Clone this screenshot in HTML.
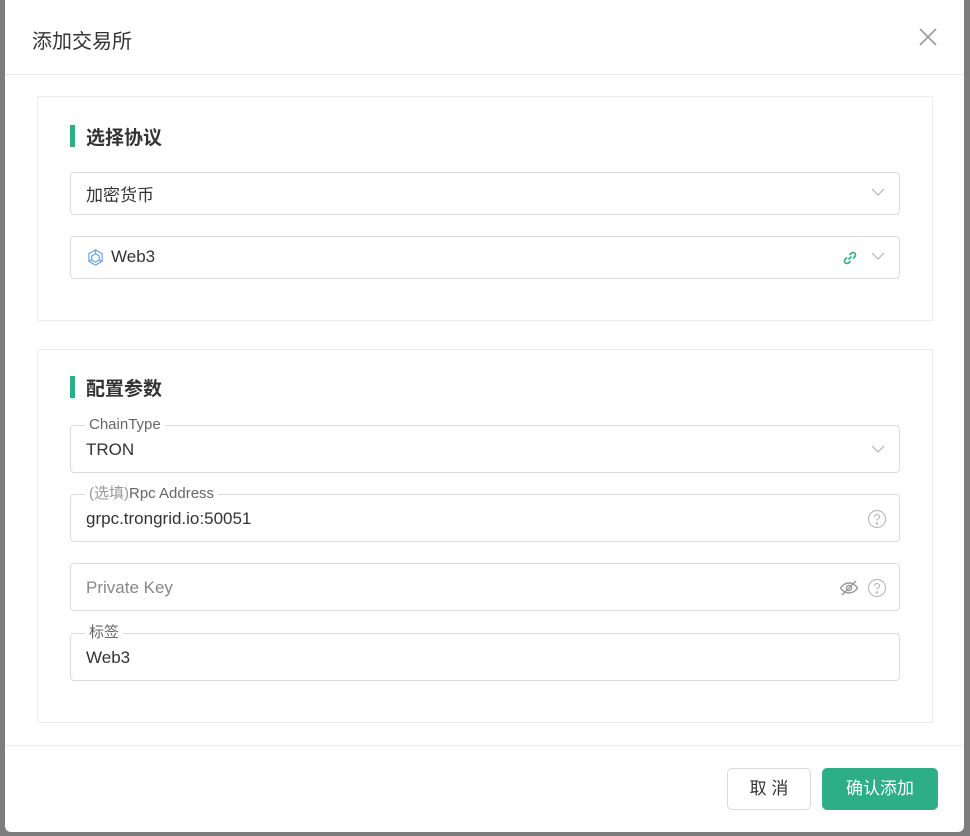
<!DOCTYPE html>
<html><head><meta charset="utf-8"><style>
*{box-sizing:border-box;margin:0;padding:0}
body{width:970px;height:836px;background:#7d7d7d;font-family:"Liberation Sans","Noto Sans CJK SC",sans-serif;position:relative;overflow:hidden}
.modal{position:absolute;left:5px;top:-6px;width:959px;height:838px;background:#fff;border-radius:6px}
.hdr{position:absolute;left:0;top:6px;width:100%;height:75px;border-bottom:1px solid #ebebeb}
.hdr .t{position:absolute;left:27px;top:25px;font-size:20px;color:#333}
.card{position:absolute;left:32px;width:896px;border:1px solid #ededed;background:#fff}
.sec{position:absolute;left:65px;font-size:19px;color:#333;font-weight:bold;padding-left:16px}
.sec:before{content:"";position:absolute;left:0;top:2px;width:5px;height:22px;background:#2dae87}
.inp{position:absolute;left:65px;width:830px;border:1px solid #dcdcdc;border-radius:4px;font-size:17px;color:#333}
.inp .v{position:absolute;left:15px}
.lbl{position:absolute;left:14px;top:-9px;background:#fff;padding:0 4px;font-size:15px;color:#666;line-height:16px}
.chev{position:absolute;right:14px}
.foot{position:absolute;left:0;top:751px;width:100%;border-top:1px solid #ebebeb}
.btn{position:absolute;height:42px;border-radius:5px;font-size:17px;text-align:center;line-height:42px}
</style></head><body>
<div class="modal">
<div class="hdr"><div class="t">添加交易所</div>
<svg style="position:absolute;left:913px;top:27px" width="20" height="20" viewBox="0 0 20 20"><path d="M2 2L18 18M18 2L2 18" stroke="#999" stroke-width="1.6"/></svg></div>

<div class="card" style="top:102px;height:225px"></div>
<div class="sec" style="top:129px">选择协议</div>
<div class="inp" style="top:178px;height:43px"><span class="v" style="top:8px">加密货币</span>
<svg class="chev" style="top:14px" width="14" height="10" viewBox="0 0 14 10"><path d="M1 2l6 6 6-6" fill="none" stroke="#bbb" stroke-width="1.3"/></svg></div>
<div class="inp" style="top:242px;height:43px">
<svg style="position:absolute;left:15px;top:11px" width="19" height="19" viewBox="0 0 20 20" fill="none" stroke="#6a9fe0" stroke-width="1.2"><path d="M10 2l7 4v8l-7 4-7-4V6z"/><path d="M10 6l4 2.5v4L10 15l-4-2.5v-4z"/><path d="M10 2v4M17 14l-3-1.5M3 14l3-1.5"/></svg>
<span class="v" style="left:40px;top:10px">Web3</span>
<svg style="position:absolute;right:40px;top:12px" width="18" height="18" viewBox="0 0 18 18" fill="none" stroke="#2dae87" stroke-width="1.6"><path d="M7.5 10.5l3-3M6 8.5l-2 2a2.5 2.5 0 003.5 3.5l2-2M12 9.5l2-2A2.5 2.5 0 0010.5 4l-2 2"/></svg>
<svg class="chev" style="top:14px" width="14" height="10" viewBox="0 0 14 10"><path d="M1 2l6 6 6-6" fill="none" stroke="#bbb" stroke-width="1.3"/></svg></div>

<div class="card" style="top:355px;height:374px"></div>
<div class="sec" style="top:380px">配置参数</div>
<div class="inp" style="top:431px;height:48px"><div class="lbl">ChainType</div><span class="v" style="top:14px">TRON</span>
<svg class="chev" style="top:18px" width="14" height="10" viewBox="0 0 14 10"><path d="M1 2l6 6 6-6" fill="none" stroke="#bbb" stroke-width="1.3"/></svg></div>
<div class="inp" style="top:500px;height:48px"><div class="lbl"><span style="color:#999">(选填)</span>Rpc Address</div><span class="v" style="top:14px">grpc.trongrid.io:50051</span>
<svg style="position:absolute;right:12px;top:14px" width="20" height="20" viewBox="0 0 20 20" fill="none" stroke="#bbb" stroke-width="1.2"><circle cx="10" cy="10" r="8.5"/><path d="M7.5 8a2.5 2.5 0 115 0c0 1.5-2.5 1.8-2.5 3.5"/><circle cx="10" cy="14.5" r=".6" fill="#bbb"/></svg></div>
<div class="inp" style="top:569px;height:48px"><span class="v" style="top:14px;color:#888">Private Key</span>
<svg style="position:absolute;right:40px;top:15px" width="20" height="18" viewBox="0 0 20 18" fill="none" stroke="#999" stroke-width="1.4"><path d="M1.5 9s3-5 8.5-5 8.5 5 8.5 5-3 5-8.5 5S1.5 9 1.5 9z"/><circle cx="10" cy="9" r="2.6"/><path d="M3 16L17 2"/></svg>
<svg style="position:absolute;right:12px;top:14px" width="20" height="20" viewBox="0 0 20 20" fill="none" stroke="#bbb" stroke-width="1.2"><circle cx="10" cy="10" r="8.5"/><path d="M7.5 8a2.5 2.5 0 115 0c0 1.5-2.5 1.8-2.5 3.5"/><circle cx="10" cy="14.5" r=".6" fill="#bbb"/></svg></div>
<div class="inp" style="top:639px;height:48px"><div class="lbl">标签</div><span class="v" style="top:14px">Web3</span></div>

<div class="foot"></div>
<div class="btn" style="left:722px;top:774px;width:84px;border:1px solid #d9d9d9;color:#333;line-height:40px">取 消</div>
<div class="btn" style="left:817px;top:774px;width:116px;background:#2dae87;color:#fff">确认添加</div>
</div>
</body></html>
